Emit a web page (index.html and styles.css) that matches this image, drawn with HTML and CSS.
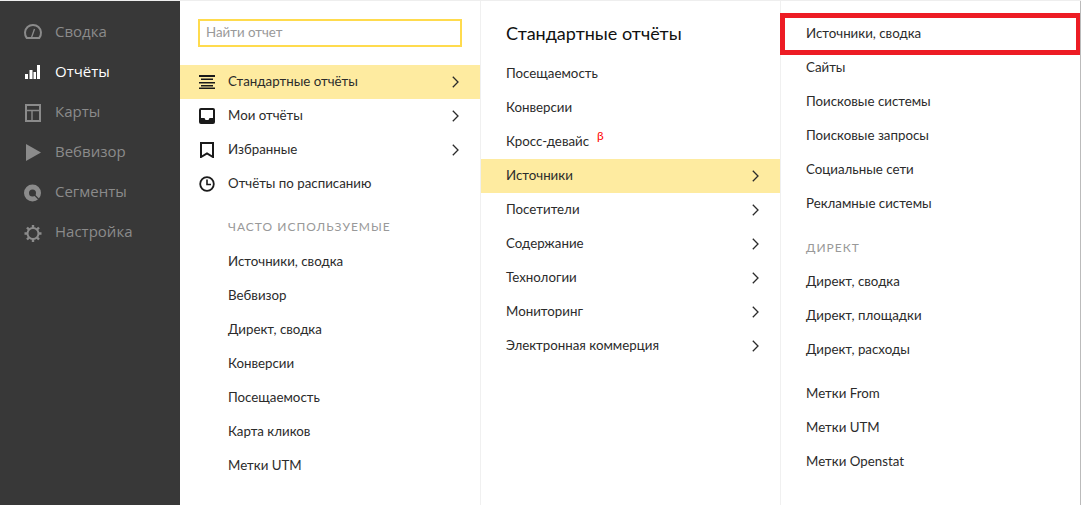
FILE: index.html
```html
<!DOCTYPE html>
<html lang="ru">
<head>
<meta charset="utf-8">
<title>Отчёты</title>
<link rel="stylesheet" href="styles.css">
</head>
<body>
<div class="app">
  <nav class="side">
    <a class="side-item"><svg class="side-ico" viewBox="0 0 18 18"><path d="M2.800 16H15.200A8 8 0 1 0 2.800 16Z" fill="none" stroke="currentColor" stroke-width="2"/><path d="M7.500 15.500 10.500 7" stroke="currentColor" stroke-width="1.300"/></svg>Сводка</a>
    <a class="side-item active"><svg class="side-ico" viewBox="0 0 18 18"><path d="M1 12h3v5H1zM5.500 8h3v9h-3zM9.500 10H12v7H9.500zM13 3h3v14h-3z" fill="currentColor"/></svg>Отчёты</a>
    <a class="side-item"><svg class="side-ico" viewBox="0 0 18 18"><path d="M2 3h14v16H2z" fill="none" stroke="currentColor" stroke-width="2"/><path d="M2 8.500h14M8 8.500V19" fill="none" stroke="currentColor" stroke-width="1.400"/></svg>Карты</a>
    <a class="side-item"><svg class="side-ico" viewBox="0 0 18 18"><path d="M2 2 17 10.500 2 19Z" fill="currentColor"/></svg>Вебвизор</a>
    <a class="side-item"><svg class="side-ico" viewBox="0 0 18 18"><circle cx="8.500" cy="11" r="6" fill="none" stroke="currentColor" stroke-width="5"/><path d="M10.500 13 15.500 18" stroke="#383838" stroke-width="1.200"/></svg>Сегменты</a>
    <a class="side-item"><svg class="side-ico" viewBox="0 0 18 18"><circle cx="9" cy="11.500" r="5.500" fill="none" stroke="currentColor" stroke-width="2"/><path d="M9 3v3M9 17v3M.500 11.500h3M14.500 11.500h3M3 5.500l2.100 2.100M12.900 15.400 15 17.500M3 17.500l2.100-2.100M12.900 7.600 15 5.500" stroke="currentColor" stroke-width="2.400"/></svg>Настройка</a>
  </nav>
  <section class="col col-a">
    <div class="search"><input class="search-input" placeholder="Найти отчет"></div>
    <a class="row sel"><svg class="row-ico" viewBox="0 0 16 16"><path d="M0 1h16v2H0zM2 4.500h12V6H2zM0 8h16v1.500H0zM2 11h12v1.500H2zM0 13.500h16V15H0z" fill="#1a1a1a"/></svg><span class="label">Стандартные отчёты</span><svg class="chev" viewBox="0 0 7 12"><path d="M.8.700l5.200 5.300-5.200 5.300" fill="none" stroke="#2b2b2b" stroke-width="1.300"/></svg></a>
    <a class="row"><svg class="row-ico" viewBox="0 0 16 16"><path d="M2 0h12a2 2 0 0 1 2 2v12a2 2 0 0 1-2 2H2a2 2 0 0 1-2-2V2a2 2 0 0 1 2-2Zm0 2v8h3.500l1 2h3l1-2H14V2Z" fill="#1a1a1a" fill-rule="evenodd"/></svg><span class="label">Мои отчёты</span><svg class="chev" viewBox="0 0 7 12"><path d="M.8.700l5.200 5.300-5.200 5.300" fill="none" stroke="#2b2b2b" stroke-width="1.300"/></svg></a>
    <a class="row"><svg class="row-ico" viewBox="0 0 16 16"><path d="M2 1h12v14l-6-3.500L2 15Z" fill="none" stroke="#1a1a1a" stroke-width="2"/></svg><span class="label">Избранные</span><svg class="chev" viewBox="0 0 7 12"><path d="M.8.700l5.200 5.300-5.200 5.300" fill="none" stroke="#2b2b2b" stroke-width="1.300"/></svg></a>
    <a class="row"><svg class="row-ico" viewBox="0 0 16 16"><circle cx="8" cy="8" r="6.800" fill="none" stroke="#1a1a1a" stroke-width="1.800"/><path d="M8 3.500V8.500H12" fill="none" stroke="#1a1a1a" stroke-width="1.600"/></svg><span class="label">Отчёты по расписанию</span></a>
    <div class="head head-a">ЧАСТО ИСПОЛЬЗУЕМЫЕ</div>
    <a class="row"><span class="label">Источники, сводка</span></a>
    <a class="row"><span class="label">Вебвизор</span></a>
    <a class="row"><span class="label">Директ, сводка</span></a>
    <a class="row"><span class="label">Конверсии</span></a>
    <a class="row"><span class="label">Посещаемость</span></a>
    <a class="row"><span class="label">Карта кликов</span></a>
    <a class="row"><span class="label">Метки UTM</span></a>
  </section>
  <section class="col col-b">
    <h2 class="title">Стандартные отчёты</h2>
    <a class="row"><span class="label">Посещаемость</span></a>
    <a class="row"><span class="label">Конверсии</span></a>
    <a class="row"><span class="label">Кросс-девайс<sup class="beta">β</sup></span></a>
    <a class="row sel"><span class="label">Источники</span><svg class="chev" viewBox="0 0 7 12"><path d="M.8.700l5.200 5.300-5.200 5.300" fill="none" stroke="#2b2b2b" stroke-width="1.300"/></svg></a>
    <a class="row"><span class="label">Посетители</span><svg class="chev" viewBox="0 0 7 12"><path d="M.8.700l5.200 5.300-5.200 5.300" fill="none" stroke="#2b2b2b" stroke-width="1.300"/></svg></a>
    <a class="row"><span class="label">Содержание</span><svg class="chev" viewBox="0 0 7 12"><path d="M.8.700l5.200 5.300-5.200 5.300" fill="none" stroke="#2b2b2b" stroke-width="1.300"/></svg></a>
    <a class="row"><span class="label">Технологии</span><svg class="chev" viewBox="0 0 7 12"><path d="M.8.700l5.200 5.300-5.200 5.300" fill="none" stroke="#2b2b2b" stroke-width="1.300"/></svg></a>
    <a class="row"><span class="label">Мониторинг</span><svg class="chev" viewBox="0 0 7 12"><path d="M.8.700l5.200 5.300-5.200 5.300" fill="none" stroke="#2b2b2b" stroke-width="1.300"/></svg></a>
    <a class="row"><span class="label">Электронная коммерция</span><svg class="chev" viewBox="0 0 7 12"><path d="M.8.700l5.200 5.300-5.200 5.300" fill="none" stroke="#2b2b2b" stroke-width="1.300"/></svg></a>
  </section>
  <section class="col col-c">
    <a class="row boxed"><span class="label">Источники, сводка</span></a>
    <a class="row"><span class="label">Сайты</span></a>
    <a class="row"><span class="label">Поисковые системы</span></a>
    <a class="row"><span class="label">Поисковые запросы</span></a>
    <a class="row"><span class="label">Социальные сети</span></a>
    <a class="row"><span class="label">Рекламные системы</span></a>
    <div class="head head-c">ДИРЕКТ</div>
    <a class="row"><span class="label">Директ, сводка</span></a>
    <a class="row"><span class="label">Директ, площадки</span></a>
    <a class="row"><span class="label">Директ, расходы</span></a>
    <div class="gap"></div>
    <a class="row"><span class="label">Метки From</span></a>
    <a class="row"><span class="label">Метки UTM</span></a>
    <a class="row"><span class="label">Метки Openstat</span></a>
  </section>
</div>
</body>
</html>
```
FILE: styles.css
```css
* { box-sizing: border-box; }
html, body { margin: 0; height: 100%; overflow: hidden; }
body { background: #fff; font-family: Lato, "Noto Sans", sans-serif; color: #2b2b2b; }
.app { display: flex; height: 505px; width: 1081px; border-top: 1px solid #eee; }
.side { width: 180px; flex: none; background: #383838; padding-top: 10px; font-family: "Open Sans", sans-serif; font-size: 15px; }
.side-item { display: flex; align-items: center; height: 40px; padding-left: 24px; color: #8b8b8b; }
.side-item.active { color: #fff; }
.side-ico { width: 18px; height: 18px; margin-right: 13px; flex: none; overflow: visible; }
.col { flex: none; display: flex; flex-direction: column; width: 301px; border-right: 1px solid #f0f0f0; font-size: 13.300px; }
.col-a { padding-top: 18px; }
.col-b { width: 300px; padding-top: 20px; }
.col-c { width: 300px; border-right: 1px solid #bbb; padding-top: 15px; }
.search { padding: 0 18px; margin-bottom: 18px; }
.search-input { display: block; width: 264px; height: 28px; border: 2px solid #ffdb4d; padding: 0 6px 3px; outline: 0; font: 13.300px Lato, "Noto Sans", sans-serif; }
.search-input::placeholder { color: #999; opacity: 1; }
.row { display: flex; align-items: center; height: 34px; flex: none; padding: 0 21px 0 25px; color: #2b2b2b; }
.col-a .row { position: relative; padding-left: 48px; }
.sel { background: #feeba0; }
.row-ico { position: absolute; left: 19px; top: 9px; width: 16px; height: 16px; }
.label { flex: 1; white-space: nowrap; padding-bottom: 3px; }
.col-c .label { padding-bottom: 1px; }
.chev { width: 7px; height: 12px; flex: none; }
.title { margin: 0 0 12px; padding: 0 25px; font-size: 18px; font-weight: 400; line-height: 24px; color: #111; }
.head { color: #999; letter-spacing: 1px; font-size: 12px; }
.head-a { padding-left: 48px; margin-top: 14px; height: 26px; line-height: 24px; margin-bottom: 4px; }
.head-c { padding-left: 25px; height: 44px; line-height: 56px; }
.gap { height: 10px; flex: none; }
.beta { color: #f00; font-size: 12px; margin-left: 8px; line-height: 0; vertical-align: 6px; }
.boxed { position: relative; }
.boxed::after { content: ""; position: absolute; left: -1px; right: 0; top: -3px; bottom: -5px; border: 5px solid #ed1c24; border-right-width: 4px; }
```
